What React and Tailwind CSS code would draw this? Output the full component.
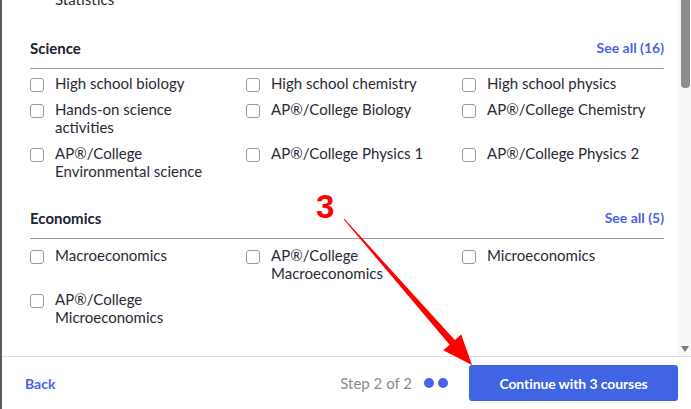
import React from "react";

const Item = ({ children }) => (
  <div className="flex items-start gap-[11px] pr-[14px]">
    <span className="mt-[4px] h-[14px] w-[14px] shrink-0 rounded-[3px] border border-[#9a9a9a] bg-white" />
    <span className="leading-[18px]">{children}</span>
  </div>
);

const Section = ({ title, count, items, rowsTop }) => (
  <div className="flex flex-col">
    <div className="flex items-center justify-between border-b border-[#9b9b9b] pb-[10px]">
      <span className="text-[15px] font-bold leading-[20px] text-[#222230]">{title}</span>
      <span className="text-[14px] font-bold leading-[20px] text-[#4a62e6]">See all ({count})</span>
    </div>
    <div className={"grid grid-cols-[216px_216px_1fr] gap-y-[8px] " + rowsTop}>
      {items.map((t, i) => (
        <Item key={i}>{t}</Item>
      ))}
    </div>
  </div>
);

export default function App() {
  return (
    <div
      className="relative flex h-[409px] w-[691px] flex-col overflow-hidden border-l-2 border-[#5a5a5a] bg-white text-[15px] text-[#2a2a36]"
      style={{ fontFamily: "Lato, 'Noto Sans', sans-serif" }}
    >
      <div className="flex min-h-0 flex-1">
        <div className="min-w-0 flex-1 overflow-hidden pl-[28px] pr-[14px]">
          <div className="-mt-[10px] flex flex-col">
            <div className="pl-[25px] leading-[18px]">Statistics</div>
            <div className="mt-[30px]">
              <Section
                title="Science"
                count={16}
                rowsTop="mt-[5px]"
                items={[
                  "High school biology",
                  "High school chemistry",
                  "High school physics",
                  "Hands-on science activities",
                  "AP®/College Biology",
                  "AP®/College Chemistry",
                  "AP®/College Environmental science",
                  "AP®/College Physics 1",
                  "AP®/College Physics 2",
                ]}
              />
            </div>
            <div className="mt-[28px]">
              <Section
                title="Economics"
                count={5}
                rowsTop="mt-[7px]"
                items={[
                  "Macroeconomics",
                  "AP®/College Macroeconomics",
                  "Microeconomics",
                  "AP®/College Microeconomics",
                ]}
              />
            </div>
          </div>
        </div>
        <div className="relative flex w-[13px] shrink-0 flex-col items-center bg-[#f8f8f8]">
          <div className="ml-[2px] h-[88px] w-[9px] rounded-b-[4px] bg-[#8c8c8c]" />
          <div className="absolute bottom-[4px] left-[3px] h-0 w-0 border-l-[4px] border-r-[4px] border-t-[6px] border-l-transparent border-r-transparent border-t-[#7a7a7a]" />
        </div>
      </div>
      <div className="flex h-[53px] shrink-0 items-center border-t border-[#dcdcdc] pl-[23px] pr-[13px]">
        <span className="text-[14px] font-bold text-[#4a62e6]">Back</span>
        <div className="flex-1" />
        <span className="text-[15px] text-[#8b8b8b]">Step 2 of 2</span>
        <div className="ml-[12px] flex gap-[4px]">
          <span className="h-[10px] w-[10px] rounded-full bg-[#4a62e6]" />
          <span className="h-[10px] w-[10px] rounded-full bg-[#4a62e6]" />
        </div>
        <button className="ml-[21px] flex h-[36px] w-[209px] items-center justify-center rounded-[3px] bg-[#4164e4] text-[14px] font-bold tracking-[-0.1px] text-white">
          Continue with 3 courses
        </button>
      </div>

      <span
        className="absolute left-[314px] top-[189px] text-[33px] font-bold leading-[36px] text-[#ff0000]"
        style={{ fontFamily: "'Liberation Sans', Arial, sans-serif" }}
      >
        3
      </span>
      <svg className="pointer-events-none absolute left-0 top-0" width="691" height="409" viewBox="0 0 691 409">
        <polygon
          points="341.6,219.3 447.6,344.7 441.2,350.3 470,365 459.2,334.5 452.8,340.1 342.4,218.7"
          fill="#ff0000"
        />
      </svg>
    </div>
  );
}
